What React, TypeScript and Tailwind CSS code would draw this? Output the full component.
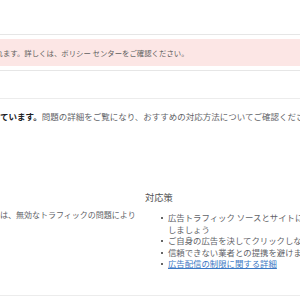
export default function App() {
  const font = { fontFamily: '"Noto Sans CJK JP", "Noto Sans", sans-serif' };
  return (
    <div className="w-[300px] h-[300px] overflow-hidden bg-white text-[#5f6368] whitespace-nowrap" style={font}>
      <div className="h-[34px]" />
      <div className="h-px bg-[#e6e6e6]" />
      <div className="h-[4px]" />
      <div className="h-[27px] bg-[#fce6e5] flex items-center overflow-hidden">
        <span className="text-[7.4px] leading-none -ml-[4.5px] text-[#5f5f5f]">れます。詳しくは、ポリシー センターをご確認ください。</span>
      </div>
      <div className="h-[4px]" />
      <div className="h-px bg-[#e6e6e6]" />
      <div className="h-[27px]" />
      <div className="h-px bg-[#ececec]" />
      <div className="h-[11px]" />
      <div className="h-[12px] flex items-center text-[8.5px] leading-none overflow-hidden">
        <span className="font-bold text-[#202124]">ています。</span>
        <span>問題の詳細をご覧になり、おすすめの対応方法についてご確認ください。</span>
      </div>
      <div className="h-[70px]" />
      <div className="flex">
        <div className="w-[145px] shrink-0 pt-[17px] text-[8px] leading-[11.5px]">
          <div>は、無効なトラフィックの問題により</div>
        </div>
        <div className="flex-1 min-w-0 overflow-hidden">
          <div className="h-[11px] flex items-center text-[9.3px] leading-none text-[#555]">対応策</div>
          <ul className="mt-[9px] pl-[23px] text-[8.4px] leading-[11.5px]">
            <li className="relative">
              <span className="absolute -left-[7px] top-[5px] w-[2px] h-[2px] bg-[#666]" />
              広告トラフィック ソースとサイトに関する情報を確認
              <br />
              しましょう
            </li>
            <li className="relative">
              <span className="absolute -left-[7px] top-[5px] w-[2px] h-[2px] bg-[#666]" />
              ご自身の広告を決してクリックしないでください
            </li>
            <li className="relative">
              <span className="absolute -left-[7px] top-[5px] w-[2px] h-[2px] bg-[#666]" />
              信頼できない業者との提携を避けましょう
            </li>
            <li className="relative">
              <span className="absolute -left-[7px] top-[5px] w-[2px] h-[2px] bg-[#666]" />
              <span className="text-[#3b78c4] underline">広告配信の制限に関する詳細</span>
            </li>
          </ul>
        </div>
      </div>
      <div className="h-[25px]" />
      <div className="h-px bg-[#ececec]" />
    </div>
  );
}
